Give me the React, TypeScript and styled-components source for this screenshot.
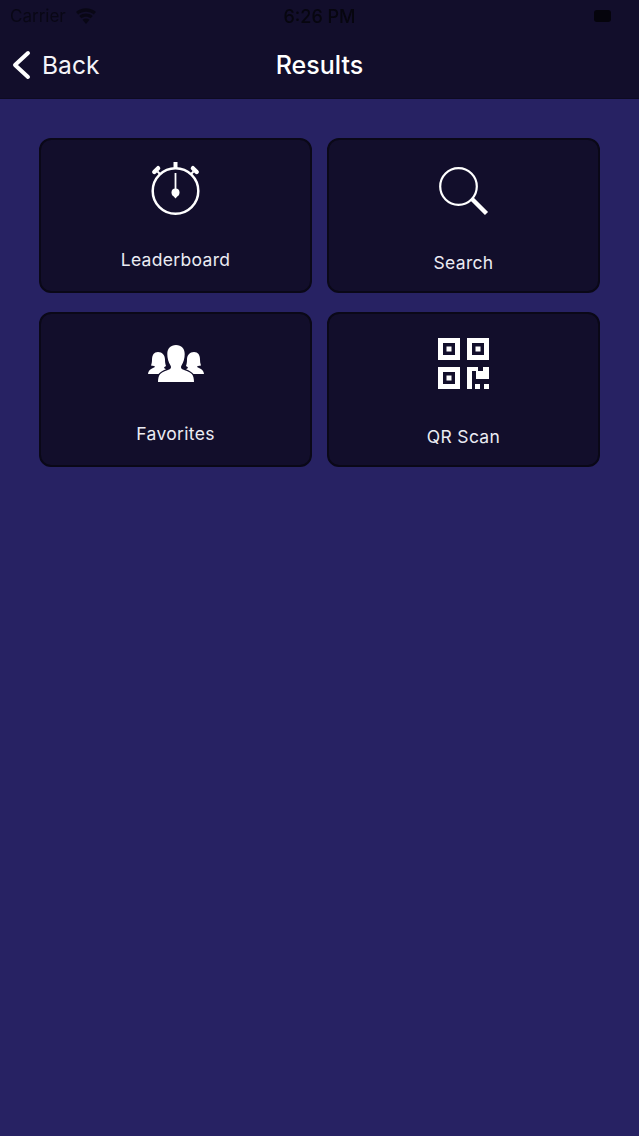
import React from "react";
import styled, { createGlobalStyle } from "styled-components";

const GlobalStyle = createGlobalStyle`
  html, body {
    margin: 0;
    padding: 0;
    background: #272263;
  }
`;

const Screen = styled.div`
  width: 639px;
  height: 1136px;
  overflow: hidden;
  display: flex;
  flex-direction: column;
  background: #272263;
  font-family: Inter, "Noto Sans", sans-serif;
  color: #ffffff;
`;

const Header = styled.header`
  height: 98px;
  flex-shrink: 0;
  display: flex;
  flex-direction: column;
  background: #120e2b;
  border-bottom: 1px solid #0e0b22;
`;

const StatusBar = styled.div`
  height: 32px;
  display: grid;
  grid-template-columns: 1fr auto 1fr;
  align-items: center;
  padding: 0 10px;
  color: #07060f;
  font-size: 17px;
  filter: blur(0.6px);
`;

const StatusLeft = styled.div`
  display: flex;
  align-items: center;
  gap: 9px;
  opacity: 0.75;
`;

const StatusTime = styled.div`
  font-weight: 500;
  font-size: 18px;
`;

const StatusRight = styled.div`
  display: flex;
  justify-content: flex-end;
  padding-right: 18px;
`;

const Battery = styled.div`
  width: 17px;
  height: 12px;
  border-radius: 3px;
  background: #05040c;
`;

const NavBar = styled.nav`
  flex: 1;
  display: grid;
  grid-template-columns: 1fr auto 1fr;
  align-items: center;
  padding: 0 12px;
  margin-top: -1px;
`;

const BackButton = styled.div`
  display: flex;
  align-items: center;
  gap: 11px;
  font-size: 24.6px;
  color: #f4f4f8;
`;

const Title = styled.h1`
  margin: 0;
  font-size: 25px;
  font-weight: 500;
`;

const Grid = styled.main`
  display: grid;
  grid-template-columns: 273px 273px;
  grid-auto-rows: 155px;
  column-gap: 15px;
  row-gap: 19px;
  padding: 39px 0 0 39px;
`;

const Card = styled.div<{ $iconTop: number; $labelTop: number }>`
  box-sizing: border-box;
  padding-top: ${(p) => p.$iconTop}px;
  display: flex;
  flex-direction: column;
  align-items: center;
  background: #120e2b;
  border: 2px solid #0a0817;
  border-radius: 12px;

  svg {
    display: block;
    flex-shrink: 0;
  }

  span {
    margin-top: ${(p) => p.$labelTop}px;
    font-size: 17.5px;
    line-height: 22px;
    letter-spacing: 0.32px;
    color: #ebebf3;
  }
`;

const StopwatchIcon = () => (
  <svg width="52" height="54" viewBox="0 0 52 54" fill="none" stroke="#fff">
    <circle cx="25.500" cy="29" r="22.800" strokeWidth="2.500" />
    <path d="M25.500 7V0" strokeWidth="4" />
    <path d="M4.300 10l3.800-3.800M46.700 10l-3.800-3.800" strokeWidth="4.400" strokeLinecap="round" />
    <path d="M7.500 9.500l2.500 2.500M43.500 9.500L41 12" strokeWidth="2" />
    <path d="M25.500 11v18" strokeWidth="1.800" />
    <circle cx="25.500" cy="30.500" r="4" fill="#fff" stroke="none" />
    <path d="M22.500 33l3 3.500 3-3.500z" fill="#fff" stroke="none" />
  </svg>
);

const SearchIcon = () => (
  <svg width="50" height="50" viewBox="0 0 50 50" fill="none" stroke="#fff">
    <circle cx="19.500" cy="19.500" r="18.300" strokeWidth="2.200" />
    <path d="M31.500 33.500l3-3" strokeWidth="2" />
    <path d="M33 32l14.500 14.500" strokeWidth="4.400" />
  </svg>
);

const SIDE_FIGURE =
  "M10 7c4.300 0 7 3.200 7 7.500 0 2.500.3 4.500 1 6.500l-1.500 1c-.7.500-.5 1 .3 1.500l1.200.7c-3.300 1.300-6 2.800-7.500 4.800H0c.2-2.500 1.500-4.500 4-5.500l2.500-1.200c.5-.4.5-1-.5-1.300L3 20.500c.8-2 1-4 1-6C4 10 6 7 10 7z";

const PeopleIcon = () => (
  <svg width="56" height="37" viewBox="0 0 56 37" fill="#fff">
    <path d={SIDE_FIGURE} />
    <path d={SIDE_FIGURE} transform="translate(56 0) scale(-1 1)" />
    <path d="M28 0c5.500 0 8.700 3.500 8.700 9 0 4-1 8-3.200 11.500-.8 1.300-.7 3 .8 3.800 3 1.600 7.500 2.400 9.500 4.700 1.600 1.800 2.200 5 2.200 8H10c0-3 .6-6.200 2.200-8 2-2.300 6.500-3.100 9.500-4.700 1.500-.8 1.600-2.500.8-3.800C20.300 17 19.300 13 19.300 9c0-5.500 3.200-9 8.700-9z" />
  </svg>
);

const QrIcon = () => (
  <svg width="52" height="51" viewBox="0 0 52 51" fill="#fff" fillRule="evenodd">
    <path d="M0 0h22v22H0zM5 5v12h12V5zM8.500 8.500h5v5h-5z" />
    <path d="M29 0h22v22H29zM34 5v12h12V5zM37.500 8.500h5v5h-5z" />
    <path d="M0 29h22v22H0zM5 34v12h12V34zM8.500 37.500h5v5h-5z" />
    <path d="M29 29h11v4h5v-4h6v12H38v-8h-4v18h-5z" />
    <path d="M37 46h5v5h-5zM46 46h5v5h-5z" />
  </svg>
);

export default function App() {
  return (
    <>
      <GlobalStyle />
      <Screen>
        <Header>
          <StatusBar>
            <StatusLeft>
              Carrier
              <svg width="22" height="16" viewBox="0 0 22 16" fill="#07060f">
                <path d="M11 16l-3.500-4.200c2-1.700 5-1.700 7 0z" />
                <path d="M6.300 10.300l-2-2.400c3.900-3.200 9.500-3.200 13.400 0l-2 2.400c-2.800-2.200-6.600-2.200-9.400 0z" />
                <path d="M3.200 6.500L1 3.900C6.800-1 15.200-1 21 3.900l-2.200 2.600C14.200 2.700 7.800 2.700 3.200 6.500z" />
              </svg>
            </StatusLeft>
            <StatusTime>6:26 PM</StatusTime>
            <StatusRight>
              <Battery />
            </StatusRight>
          </StatusBar>
          <NavBar>
            <BackButton>
              <svg width="19" height="30" viewBox="0 0 19 30" fill="none" stroke="#fff" strokeWidth="4" strokeLinecap="round" strokeLinejoin="round">
                <path d="M16 3L3 15l13 12" />
              </svg>
              Back
            </BackButton>
            <Title>Results</Title>
          </NavBar>
        </Header>
        <Grid>
          <Card $iconTop={22} $labelTop={33}>
            <StopwatchIcon />
            <span>Leaderboard</span>
          </Card>
          <Card $iconTop={27} $labelTop={35}>
            <SearchIcon />
            <span>Search</span>
          </Card>
          <Card $iconTop={31} $labelTop={41}>
            <PeopleIcon />
            <span>Favorites</span>
          </Card>
          <Card $iconTop={24} $labelTop={37}>
            <QrIcon />
            <span>QR Scan</span>
          </Card>
        </Grid>
      </Screen>
    </>
  );
}
